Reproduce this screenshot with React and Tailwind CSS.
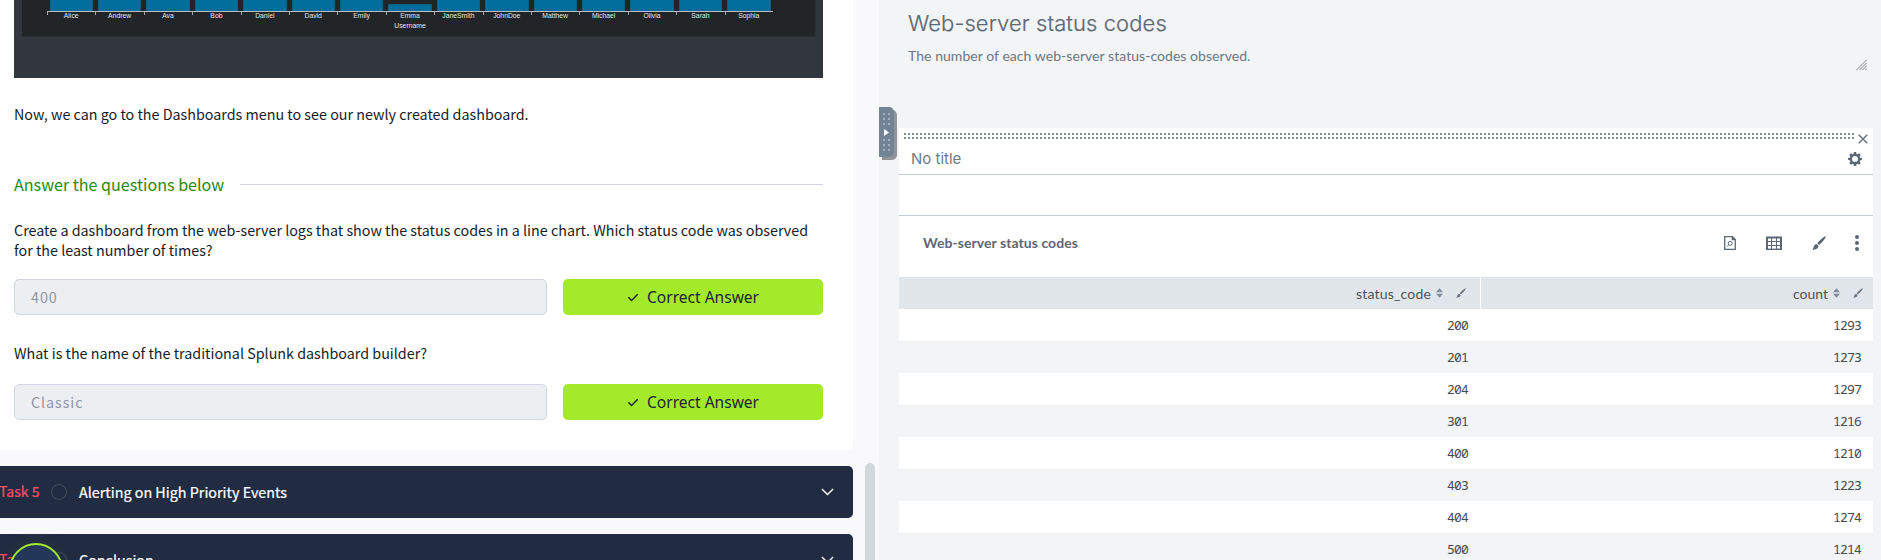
const users = ["Alice", "Andrew", "Ava", "Bob", "Daniel", "David", "Emily", "Emma", "JaneSmith", "JohnDoe", "Matthew", "Michael", "Olivia", "Sarah", "Sophia"];

const rows = [
  ["200", "1293"],
  ["201", "1273"],
  ["204", "1297"],
  ["301", "1216"],
  ["400", "1210"],
  ["403", "1223"],
  ["404", "1274"],
  ["500", "1214"],
];

function ChartShot() {
  return (
    <div className="ml-[14px] h-[78px] w-[809px] shrink-0 overflow-hidden bg-[#31363f] pl-2 font-['Liberation_Sans',sans-serif] text-[#e4e6e8]">
      <div className="h-[37px] w-[794px] border-r border-b border-[#2a2e33] bg-[#212527] pl-[25px]">
        <div className="flex w-[726px] flex-col">
          <div className="grid h-[11px] w-[726px] grid-cols-15 items-end">
            {users.map((u) => (
              <div key={u} className={u === "Emma" ? "mx-[2.5px] h-[7px] border-x border-t border-[#0d5f82] bg-[#006d9c]" : "mx-[2.5px] h-[11px] border-x border-[#0d5f82] bg-[#006d9c]"} />
            ))}
          </div>
          <div className="grid h-[9px] w-[726px] grid-cols-15 border-t border-[#b9bcbf]">
            {users.map((u) => (
              <div key={u} className="relative text-center text-[6.8px] leading-[8px]">
                <span className="absolute top-0 left-0 h-[3px] w-px bg-[#a0a3a6]" />
                {u}
              </div>
            ))}
          </div>
          <div className="mt-[2px] w-[726px] text-center text-[6.8px] leading-[8px]">Username</div>
        </div>
      </div>
    </div>
  );
}

function Answer({ value }) {
  return (
    <div className="flex h-9 gap-4">
      <div className="flex h-9 w-[533px] items-center rounded-[5px] border border-[#d0d5df] bg-[#edeef2] pl-4 text-[14.3px] tracking-[0.95px] text-[#8d94a5]">{value}</div>
      <div className="flex h-9 w-[260px] items-center rounded-[5px] bg-[#a3ea2a] pl-[65px] font-['Noto_Sans',sans-serif] text-[15.55px] text-[#1c2538]">
        <svg className="mr-[9px] h-[9px] w-[10px]" viewBox="0 0 10 9" fill="none" stroke="currentColor" strokeWidth="1.4">
          <path d="M.4 4.3 3.6 7.5 9.7 1.2" />
        </svg>
        <span className="pt-0.5">Correct Answer</span>
      </div>
    </div>
  );
}

function Task({ n, title }) {
  return (
    <div className="flex h-[52px] w-[853px] shrink-0 items-center rounded-r-[5px] bg-[#212c42] pr-[19px]">
      <span className="-ml-px w-[52px] whitespace-nowrap text-[14.1px] text-[#ff4f64] [-webkit-text-stroke:0.2px_#ff4f64]">{n}</span>
      <span className="size-4 rounded-full border border-[#434d5b]" />
      <span className="ml-3 flex-1 text-[14.35px] text-white [-webkit-text-stroke:0.2px_white]">{title}</span>
      <svg className="h-[8px] w-[13px]" viewBox="0 0 13 8" fill="none" stroke="#fff" strokeWidth="1.4">
        <path d="M.9 1 6.5 6.6 12.1 1" />
      </svg>
    </div>
  );
}

function Brush({ className }) {
  return (
    <svg className={className} viewBox="0 0 14 14" fill="currentColor">
      <path d="M13.8.2C12.2-.1 6.8 5 5.3 7.3L7 9C9.5 7 14.2 1.8 13.8.2ZM4.6 8 6.3 9.7C6.7 12 4.5 13.8.2 13.8 1.4 12.8 1.3 12 1.8 10.5 2.3 9 3.5 8 4.6 8Z" />
    </svg>
  );
}

function Sort() {
  return (
    <svg className="h-[10px] w-[7px] text-[#818d99]" viewBox="0 0 7 10" fill="currentColor">
      <path d="M3.5.3 7 4.2H0ZM3.5 9.7 7 5.8H0Z" />
    </svg>
  );
}

function Gear() {
  return (
    <svg className="size-[14px]" viewBox="-7 -7 14 14">
      <circle r="4.1" fill="none" stroke="#5a6675" strokeWidth="2.2" />
      {[0, 45, 90, 135, 180, 225, 270, 315].map((a) => (
        <path key={a} d="M-1.6-4.6-1.1-6.9H1.1L1.6-4.6Z" fill="#5a6675" transform={`rotate(${a})`} />
      ))}
    </svg>
  );
}

function LeftPane() {
  return (
    <div className="relative h-[560px] w-[879px] shrink-0 overflow-hidden bg-[#f9f9fb] font-['Noto_Sans_CJK_SC',sans-serif] text-[14.32px] text-[#151c2b]">
      <div className="flex h-[560px] flex-col">
        <div className="flex h-[450px] w-[853px] shrink-0 flex-col rounded-br-[5px] bg-white">
          <ChartShot />
          <div className="ml-[14px] flex w-[809px] flex-col">
            <p className="mt-[26px] h-5 leading-5">Now, we can go to the Dashboards menu to see our newly created dashboard.</p>
            <div className="mt-[49px] flex h-6 items-center gap-4">
              <h2 className="pb-0.5 text-[16.1px] leading-6 whitespace-nowrap text-[#298a0c]">Answer the questions below</h2>
              <div className="-mt-px h-px flex-1 bg-[#d2d6df]" />
            </div>
            <p className="mt-[23px] mb-[19px] h-10 leading-5">
              Create a dashboard from the web-server logs that show the status codes in a line chart. Which status code was observed for the least number of times?
            </p>
            <Answer value="400" />
            <p className="mt-[28px] mb-[21px] h-5 leading-5">What is the name of the traditional Splunk dashboard builder?</p>
            <Answer value="Classic" />
          </div>
        </div>
        <div className="mt-4 flex flex-col gap-4">
          <Task n="Task 5" title="Alerting on High Priority Events" />
          <Task n="Task 6" title="Conclusion" />
        </div>
      </div>
      <div className="absolute top-[543px] left-[9px] size-[54px] rounded-full border-2 border-[#a3ea2a] bg-[#22375a] shadow-[0_0_14px_rgba(60,70,60,0.35)]" />
      <div className="absolute top-[463px] left-[865px] h-[120px] w-[10px] rounded-full bg-[#d3d8df]" />
    </div>
  );
}

function Dots() {
  return (
    <span className="grid grid-cols-2 gap-[3px]">
      {[0, 1, 2, 3, 4, 5].map((i) => (
        <span key={i} className="size-[2px] bg-[#a3afbd]" />
      ))}
    </span>
  );
}

function RightPane() {
  return (
    <div className="relative flex h-[560px] flex-1 flex-col overflow-hidden bg-[#f2f4f5] font-['Lato',sans-serif] text-[#5c6773] [font-variant-ligatures:none]">
      <div className="flex h-[128px] shrink-0 flex-col pl-[30px]">
        <h1 className="-ml-px mt-[7px] h-[32px] font-['Inter',sans-serif] text-[22px] leading-[32px] font-light tracking-[0.08px] [-webkit-text-stroke:0.2px_#5c6773]">Web-server status codes</h1>
        <div className="flex items-start justify-between pr-[14px]">
          <p className="-ml-px mt-[7px] text-[14px] leading-5 tracking-[0.05px] text-[#6b7785]">The number of each web-server status-codes observed.</p>
          <svg className="mt-[20px] size-[11px]" viewBox="0 0 11 11" stroke="#83878b" strokeWidth="1" fill="none">
            <path d="M.5 11 11 .5M3.5 11 11 3.5M6.5 11 11 6.5M9.5 11 11 9.5" />
          </svg>
        </div>
      </div>

      <div className="ml-5 flex h-[432px] w-[974px] shrink-0 flex-col bg-white">
        <div className="flex h-[47px] shrink-0 flex-col border-b border-[#c3cbd4]">
          <div className="flex h-[17px] items-start justify-between pt-[5px] pr-[5px] pl-[5px]">
            <div className="h-[6px] w-[950px] bg-[conic-gradient(#818d99_0_25%,transparent_0)] bg-[length:4px_4px] bg-[position:-2px_0px]" />
            <svg className="mt-px size-[10px]" viewBox="0 0 10 10" stroke="#6b7785" strokeWidth="1.5">
              <path d="M.7.7 9.3 9.3M9.3.7.7 9.3" />
            </svg>
          </div>
          <div className="flex h-[28px] items-center justify-between pr-[11px] pl-[12px]">
            <span className="font-['Inter',sans-serif] text-[15px] text-[#6f7b88]">No title</span>
            <Gear />
          </div>
        </div>
        <div className="h-[41px] shrink-0 border-b border-[#c3cbd4]" />
        <div className="flex h-[61px] shrink-0 items-center pr-[14px] pb-[8px] pl-6">
          <h3 className="flex-1 text-[14px] font-bold tracking-[0.06px]">Web-server status codes</h3>
          <svg className="mr-[30px] h-[14px] w-[12px]" viewBox="0 0 12 14" fill="none" stroke="#5c6773" strokeWidth="1.3">
            <path d="M.7.7H8.5L11.3 3.5V13.3H.7ZM8.3.9V3.7H11.2" />
            <circle cx="6.2" cy="7.3" r="2" strokeWidth="1" />
            <path d="M4.8 8.8 3.2 10.4" strokeWidth="1" />
          </svg>
          <svg className="mr-[30px] h-[14px] w-[16px]" viewBox="0 0 16 14" fill="none" stroke="#5c6773">
            <path d="M1 .5V13.5M15 .5V13.5M0 1.5H16" strokeWidth="2" />
            <path d="M0 13.3H16" strokeWidth="1.4" />
            <path d="M5.5 2V13M10.5 2V13M1 5.5H15M1 9.5H15" />
          </svg>
          <Brush className="mr-[29px] size-[14px]" />
          <span className="flex flex-col gap-[2px]">
            <span className="size-1 rounded-full bg-current" />
            <span className="size-1 rounded-full bg-current" />
            <span className="size-1 rounded-full bg-current" />
          </span>
        </div>

        <div className="grid h-8 shrink-0 grid-cols-[581px_392px] gap-px text-[14px] text-[#4a535d]">
          <div className="flex items-center justify-end bg-[#e1e6ea] pr-[14px]">
            <span className="tracking-[0.18px]">status_code</span>
            <span className="mr-[13px] ml-[5px]"><Sort /></span>
            <Brush className="size-[10px] text-[#6b7785]" />
          </div>
          <div className="flex items-center justify-end bg-[#e1e6ea] pr-[10px]">
            <span>count</span>
            <span className="mr-[13px] ml-[5px]"><Sort /></span>
            <Brush className="size-[10px] text-[#6b7785]" />
          </div>
        </div>
        {rows.map(([code, count]) => (
          <div key={code} className="grid h-8 shrink-0 grid-cols-[581px_393px] items-center pt-px text-right font-['Noto_Sans_Mono','DejaVu_Sans_Mono',monospace] text-[13px] leading-[31px] tracking-[-0.8px] text-[#434b54] even:bg-[#f2f4f5] odd:bg-white">
            <span className="pr-[12px]">{code}</span>
            <span className="pr-[12px]">{count}</span>
          </div>
        ))}
      </div>

      <div className="absolute top-[107px] left-0 flex h-[50px] w-[15px] flex-col items-center justify-between rounded-r-[5px] bg-[#738396] py-[6px] shadow-[3px_3px_0_#929396]">
        <Dots />
        <svg className="h-[7px] w-[5px]" viewBox="0 0 5 7"><path d="M0 0 5 3.5 0 7Z" fill="#fff" /></svg>
        <Dots />
      </div>
    </div>
  );
}

export default function App() {
  return (
    <div className="flex h-[560px] w-[1881px] overflow-hidden">
      <LeftPane />
      <RightPane />
    </div>
  );
}
